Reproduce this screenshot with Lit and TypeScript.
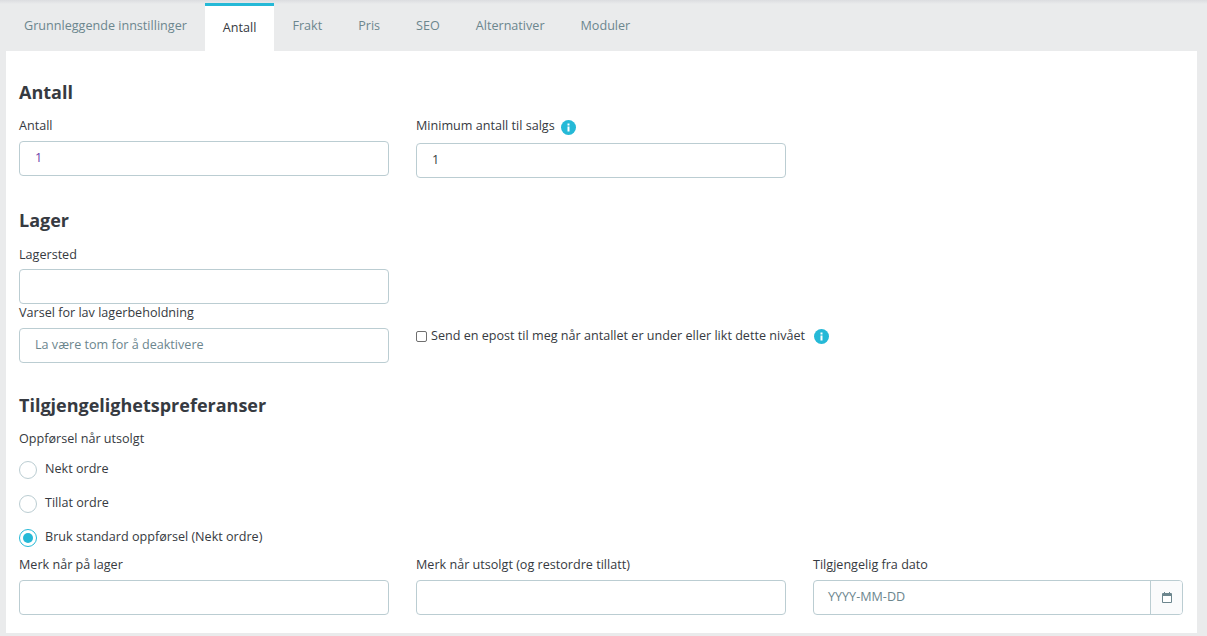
import { LitElement, html, css } from "lit";
import { customElement } from "lit/decorators.js";

const info = html`<svg class="info" viewBox="0 0 15 15" width="15" height="15"><circle cx="7.5" cy="7.5" r="7.5" fill="#25b9d7"/><rect x="6.5" y="3.5" width="2" height="2" fill="#fff"/><rect x="6.5" y="6.5" width="2" height="5" fill="#fff"/></svg>`;

@customElement("app-root")
export class AppRoot extends LitElement {
  static styles = css`
    :host { display: block; width: 1207px; height: 636px; overflow: hidden; background: #eaebec; font-family: "Open Sans", sans-serif; font-size: 12.6px; color: #363a41; }
    * { box-sizing: border-box; }
    .page { position: relative; height: 636px; display: flex; flex-direction: column; }
    .shade { position: absolute; left: 0; right: 0; top: 0; height: 4px; background: linear-gradient(#dcdde0, #eaebec); }
    .tabs { display: flex; height: 51px; padding: 3px 0 0 6px; flex: none; position: relative; }
    .tab { padding: 14px 18px 0; line-height: 18px; color: #6c868e; white-space: nowrap; }
    .tab.active { background: #fff; border-top: 3px solid #25b9d7; color: #363a41; padding-top: 13px; }
    .card { background: #fff; margin: 0 10px 0 6px; height: 582px; padding: 0 13px; flex: none; }
    h2 { margin: 0; font-size: 18px; font-weight: 700; line-height: 24px; color: #363a41; }
    .sp-top { height: 29px; }
    .sp-a { height: 30px; }
    .sp-b { height: 30px; }
    .grid { display: grid; grid-template-columns: 370px 370px 370px; column-gap: 27px; }
    .gap { margin-top: 13px; }
    .gap14 { margin-top: 14px; }
    label { display: block; line-height: 18px; white-space: nowrap; }
    .field { display: flex; flex-direction: column; }
    .input { height: 35px; margin-top: 6px; border: 1px solid #bbcdd2; border-radius: 4px; padding: 0 15px 2px; display: flex; align-items: center; color: #363a41; background: #fff; }
    .wide { margin-top: 8px; }
    .tight { margin-top: 5px; }
    .ph { color: #6c868e; }
    .purple { color: #6a3aa8; }
    .info { flex: none; }
    .lblinfo { display: flex; align-items: center; gap: 6px; height: 18px; line-height: 18px; white-space: nowrap; }
    .lblinfo .info { margin-top: 2px; }
    .check { display: flex; align-items: center; height: 18px; margin-top: 23px; white-space: nowrap; line-height: 18px; }
    .check .info { margin-left: 9px; }
    .box { width: 11px; height: 11px; border: 1px solid #6f6f6f; border-radius: 2px; background: #fff; margin-right: 4px; flex: none; }
    .radios { margin-top: 12px; }
    .radio { display: flex; align-items: flex-start; height: 34px; }
    .radio.last { height: 28px; }
    .radio span { line-height: 18px; }
    .circle { width: 18px; height: 18px; border: 1px solid #bbcdd2; border-radius: 50%; margin: 1px 8px 0 0; flex: none; display: flex; align-items: center; justify-content: center; }
    .circle.on { border-color: #25b9d7; }
    .circle.on::after { content: ""; width: 10px; height: 10px; border-radius: 50%; background: #25b9d7; }
    .date { display: flex; height: 35px; margin-top: 6px; border: 1px solid #bbcdd2; border-radius: 4px; overflow: hidden; }
    .date .txt { flex: 1; padding: 0 14px 2px; display: flex; align-items: center; color: #6c868e; }
    .date .btn { width: 32px; background: #fafbfc; border-left: 1px solid #bbcdd2; display: flex; align-items: center; justify-content: center; padding-bottom: 1px; }
  `;

  render() {
    return html`<div class="page">
      <div class="shade"></div>
      <div class="tabs">
        <div class="tab">Grunnleggende innstillinger</div>
        <div class="tab active">Antall</div>
        <div class="tab">Frakt</div>
        <div class="tab">Pris</div>
        <div class="tab">SEO</div>
        <div class="tab">Alternativer</div>
        <div class="tab">Moduler</div>
      </div>
      <div class="card">
        <div class="sp-top"></div>
        <h2>Antall</h2>
        <div class="grid gap">
          <div class="field">
            <label>Antall</label>
            <div class="input"><span class="purple">1</span></div>
          </div>
          <div class="field">
            <div class="lblinfo">Minimum antall til salgs ${info}</div>
            <div class="input wide">1</div>
          </div>
        </div>
        <div class="sp-a"></div>
        <h2>Lager</h2>
        <div class="grid gap14">
          <div class="field">
            <label>Lagersted</label>
            <div class="input tight"></div>
          </div>
        </div>
        <div class="grid">
          <div class="field">
            <label>Varsel for lav lagerbeholdning</label>
            <div class="input"><span class="ph">La være tom for å deaktivere</span></div>
          </div>
          <div class="field">
            <div class="check"><span class="box"></span>Send en epost til meg når antallet er under eller likt dette nivået ${info}</div>
          </div>
        </div>
        <div class="sp-b"></div>
        <h2>Tilgjengelighetspreferanser</h2>
        <div class="gap"><label>Oppførsel når utsolgt</label></div>
        <div class="radios">
          <div class="radio"><div class="circle"></div><span>Nekt ordre</span></div>
          <div class="radio"><div class="circle"></div><span>Tillat ordre</span></div>
          <div class="radio last"><div class="circle on"></div><span>Bruk standard oppførsel (Nekt ordre)</span></div>
        </div>
        <div class="grid">
          <div class="field"><label>Merk når på lager</label><div class="input"></div></div>
          <div class="field"><label>Merk når utsolgt (og restordre tillatt)</label><div class="input"></div></div>
          <div class="field"><label>Tilgjengelig fra dato</label>
            <div class="date"><div class="txt">YYYY-MM-DD</div><div class="btn">
              <svg width="10" height="11" viewBox="0 0 10 11"><path d="M2 0h1v1h4V0h1v1h1a1 1 0 0 1 1 1v8a1 1 0 0 1-1 1H1a1 1 0 0 1-1-1V2a1 1 0 0 1 1-1h1z" fill="#6c868e"/><rect x="1" y="4" width="8" height="6" fill="#fff"/></svg>
            </div></div>
          </div>
        </div>
      </div>
    </div>`;
  }
}
